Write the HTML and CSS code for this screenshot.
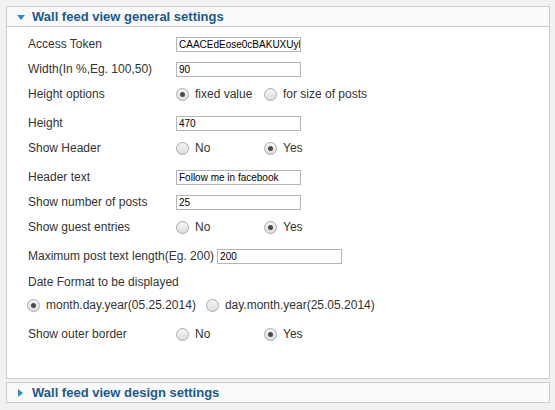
FILE: index.html
```html
<!DOCTYPE html>
<html>
<head>
<meta charset="utf-8">
<link rel="stylesheet" href="styles.css">
</head>
<body>
<div class="panel">
  <div class="phead"><span class="tri-down"></span><span class="ptitle">Wall feed view general settings</span></div>
  <div class="pbody">
    <div class="row"><span class="lbl">Access Token</span><span class="inp">CAACEdEose0cBAKUXUyl</span></div>
    <div class="row"><span class="lbl">Width(In %,Eg. 100,50)</span><span class="inp">90</span></div>
    <div class="row radio"><span class="lbl">Height options</span>
      <span class="opt"><span class="rb on"></span>fixed value</span>
      <span class="opt"><span class="rb"></span>for size of posts</span></div>
    <div class="row"><span class="lbl">Height</span><span class="inp">470</span></div>
    <div class="row radio"><span class="lbl">Show Header</span>
      <span class="opt"><span class="rb"></span>No</span>
      <span class="opt"><span class="rb on"></span>Yes</span></div>
    <div class="row"><span class="lbl">Header text</span><span class="inp">Follow me in facebook</span></div>
    <div class="row"><span class="lbl">Show number of posts</span><span class="inp">25</span></div>
    <div class="row radio"><span class="lbl">Show guest entries</span>
      <span class="opt"><span class="rb"></span>No</span>
      <span class="opt"><span class="rb on"></span>Yes</span></div>
    <div class="row wide"><span class="lbl-auto">Maximum post text length(Eg. 200)</span><span class="inp">200</span></div>
    <div class="row tight"><span class="lbl-auto">Date Format to be displayed</span></div>
    <div class="row radio dates">
      <span class="opt-auto"><span class="rb on"></span>month.day.year(05.25.2014)</span>
      <span class="opt-auto"><span class="rb"></span>day.month.year(25.05.2014)</span></div>
    <div class="row radio last"><span class="lbl">Show outer border</span>
      <span class="opt"><span class="rb"></span>No</span>
      <span class="opt"><span class="rb on"></span>Yes</span></div>
  </div>
</div>
<div class="panel">
  <div class="phead"><span class="tri-right"></span><span class="ptitle">Wall feed view design settings</span></div>
</div>
</body>
</html>
```
FILE: styles.css
```css
html, body { margin: 0; padding: 0; }
body {
  background: #f1f1f1;
  padding: 6px 5px 0 6px;
  font-family: "Liberation Sans", Arial, sans-serif;
  font-size: 12px;
  color: #333;
}
.panel {
  border: 1px solid #cdcdcd;
  background: #fff;
  margin-bottom: 3px;
}
.phead {
  height: 19px;
  background: #f9f9f9;
  display: flex;
  align-items: center;
}
.pbody {
  border-top: 1px solid #cdcdcd;
  padding: 6px 0 26px 21px;
}
.tri-down {
  width: 0; height: 0;
  border-left: 4px solid transparent;
  border-right: 4px solid transparent;
  border-top: 5px solid #2b8cc4;
  margin: 1px 7px 0 10px;
}
.tri-right {
  width: 0; height: 0;
  border-top: 4px solid transparent;
  border-bottom: 4px solid transparent;
  border-left: 5px solid #2b8cc4;
  margin: 1px 9px 0 11px;
}
.ptitle {
  font-size: 13px;
  font-weight: bold;
  color: #1b5a8c;
}
.row {
  height: 22px;
  display: flex;
  align-items: center;
  margin-bottom: 3px;
}
.row.radio { margin-bottom: 7px; }
.row.wide { margin-bottom: 4px; }
.row.tight { margin-bottom: 1px; }
.row.dates { margin-left: -1px; }
.lbl { width: 148px; flex: none; }
.lbl-auto { flex: none; margin-right: 3px; }
.inp {
  box-sizing: border-box;
  width: 125px;
  height: 15px;
  border: 1px solid #b5b5b5;
  background: #fff;
  font-size: 10px;
  color: #000;
  line-height: 13px;
  padding: 0 2px;
  white-space: nowrap;
  overflow: hidden;
}
.opt { width: 88px; display: flex; align-items: center; flex: none; white-space: nowrap; }
.opt-auto { display: flex; align-items: center; margin-right: 10px; white-space: nowrap; }
.rb {
  box-sizing: border-box;
  width: 13px; height: 13px;
  border-radius: 50%;
  border: 1px solid #a9a9a9;
  background: linear-gradient(#f4f4f4, #dedede);
  margin-right: 6px;
  display: flex;
  align-items: center;
  justify-content: center;
  flex: none;
}
.rb.on::after {
  content: "";
  width: 5px; height: 5px;
  border-radius: 50%;
  background: #4a4a4a;
}
```
